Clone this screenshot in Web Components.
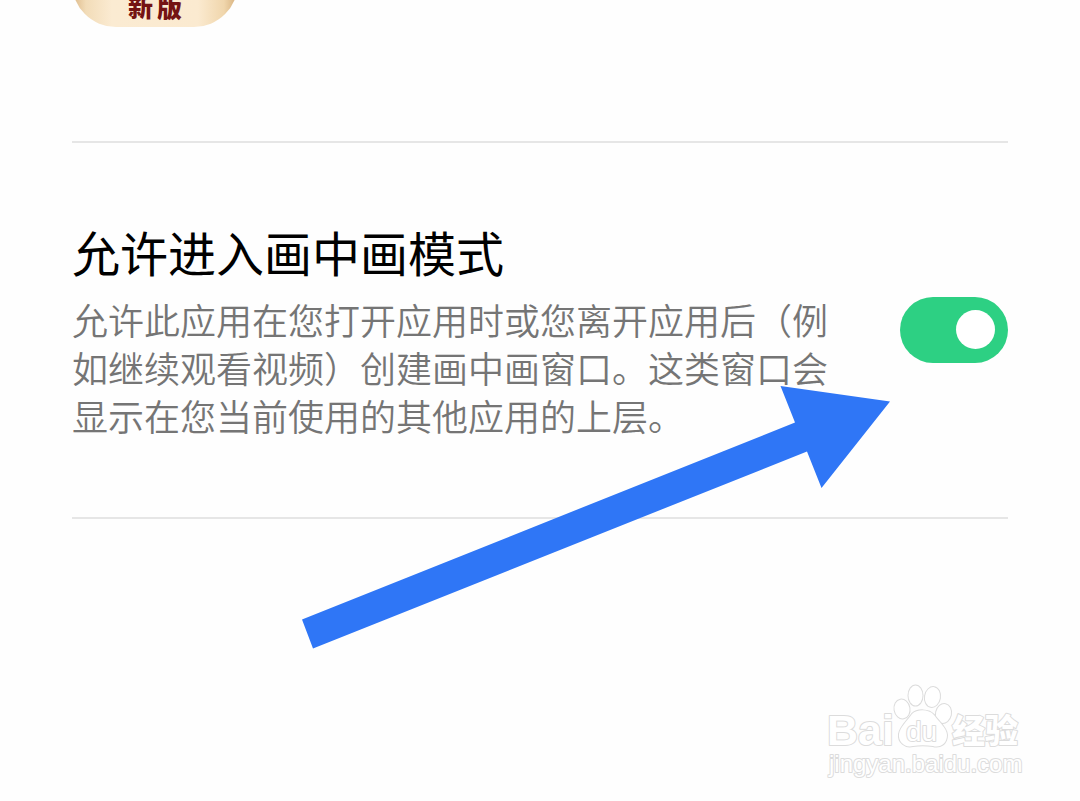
<!DOCTYPE html>
<html lang="zh-CN">
<head>
<meta charset="utf-8">
<title>画中画</title>
<style>
body { margin: 0; background: #fefefe; font-family: "Noto Sans CJK SC", "Noto Sans", sans-serif; }
</style>
</head>
<body>
<pip-page></pip-page>
<script>
function define(name, html, setup) {
  const template = document.createElement('template');
  template.innerHTML = html;
  customElements.define(name, class extends HTMLElement {
    constructor() {
      super();
      this.attachShadow({ mode: 'open' }).append(template.content.cloneNode(true));
      if (setup) setup(this);
    }
  });
}

define('app-badge', `
<style>
:host { display: block; height: 28px; overflow: hidden; }
.icon { display: flex; align-items: flex-end; justify-content: center; gap: 4px; box-sizing: border-box;
  width: 166px; height: 166px; margin-top: -139px; padding-bottom: 7px; border-radius: 44px;
  background: linear-gradient(90deg, #dcb887 0, #f2dcb8 14px, #fbebd2 40px, #fbead0 126px, #f0d6ac 152px, #d4ad79 100%);
  color: #741313; font-size: 25px; line-height: 28px; font-weight: 900; }
</style>
<div class="icon"><span>新</span><span>版</span></div>`);

define('toggle-switch', `
<style>
:host { display: block; flex: none; }
input { appearance: none; display: flex; align-items: center; box-sizing: border-box; width: 108px; height: 66px;
  margin: 0; padding: 0 13px; border-radius: 33px; background: #d8d8d8; cursor: pointer; }
input::before { content: ""; width: 39px; height: 39px; border-radius: 50%; background: #fff; }
input:checked { justify-content: flex-end; background: #2dd083; }
</style>
<input type="checkbox" role="switch" checked>`, host => {
  host.shadowRoot.querySelector('input').setAttribute('aria-label', host.getAttribute('label') || '允许进入画中画模式');
});

define('setting-row', `
<style>
:host { display: flex; align-items: center; justify-content: space-between; gap: 64px; padding: 77px 0 78px;
  border-top: 2px solid #e6e6e6; border-bottom: 2px solid #e6e6e6; }
.text { flex: 1; max-width: 760px; }
h2 { margin: 0 0 13px; color: #000; font-size: 48px; line-height: 62px; font-weight: 400; }
p { margin: 0; color: #757575; font-size: 36px; line-height: 48px; font-weight: 350; }
</style>
<div class="text"><h2><slot name="title"></slot></h2><p><slot></slot></p></div>
<slot name="control"></slot>`);

define('pointer-arrow', `
<style>
:host { display: block; position: absolute; left: 302px; top: 386px; pointer-events: none; }
svg { display: block; }
</style>
<svg width="588" height="263" viewBox="302 386 588 263" aria-hidden="true">
<path fill="#2f76f6" d="M890 401.500 780.500 386 795 422.500 302 619.500 313 648.500 807 451.500 821.500 488Z"/></svg>`);

define('site-watermark', `
<style>
:host { display: block; position: absolute; left: 820px; top: 680px; pointer-events: none; }
svg { display: block; }
text, .paw { fill: #fff; stroke: #dcdcdc; stroke-width: 2px; paint-order: stroke; stroke-linejoin: round; }
.latin { font-family: "Liberation Sans", Arial, sans-serif; }
</style>
<svg width="210" height="104" viewBox="820 680 210 104">
<text class="latin" x="827" y="745" font-size="43" font-weight="700">Bai</text>
<g class="paw">
<ellipse cx="902" cy="709" rx="7.500" ry="9.500" transform="rotate(-10 902 709)"/>
<ellipse cx="915.500" cy="695.500" rx="7" ry="10"/>
<ellipse cx="932.500" cy="697" rx="7.500" ry="10" transform="rotate(10 932.500 697)"/>
<ellipse cx="943.500" cy="713.500" rx="7.500" ry="9.500" transform="rotate(12 943.500 713.500)"/>
<path d="M912 714C917 709 929 709 934 715C938 721 947 728 947 735C947 744 940 748 933 746C926 745 919 745 913 746C905 748 898 742 899 734C900 727 908 720 912 714Z"/>
</g>
<text class="latin" x="906" y="741" font-size="28">du</text>
<text x="952" y="743" font-size="33" font-weight="900">经验</text>
<text class="latin" x="829" y="772" font-size="24">jingyan.baidu.com</text>
</svg>`);

define('pip-page', `
<style>
:host { display: block; position: relative; overflow: hidden; min-height: 100vh; }
main { padding: 0 72px; }
app-badge { margin-bottom: 113px; }
</style>
<main>
<app-badge></app-badge>
<setting-row><span slot="title">允许进入画中画模式</span>允许此应用在您打开应用时或您离开应用后（例如继续观看视频）创建画中画窗口。这类窗口会显示在您当前使用的其他应用的上层。<toggle-switch slot="control" label="允许进入画中画模式"></toggle-switch></setting-row>
</main>
<pointer-arrow></pointer-arrow>
<site-watermark></site-watermark>`);
</script>
</body>
</html>
